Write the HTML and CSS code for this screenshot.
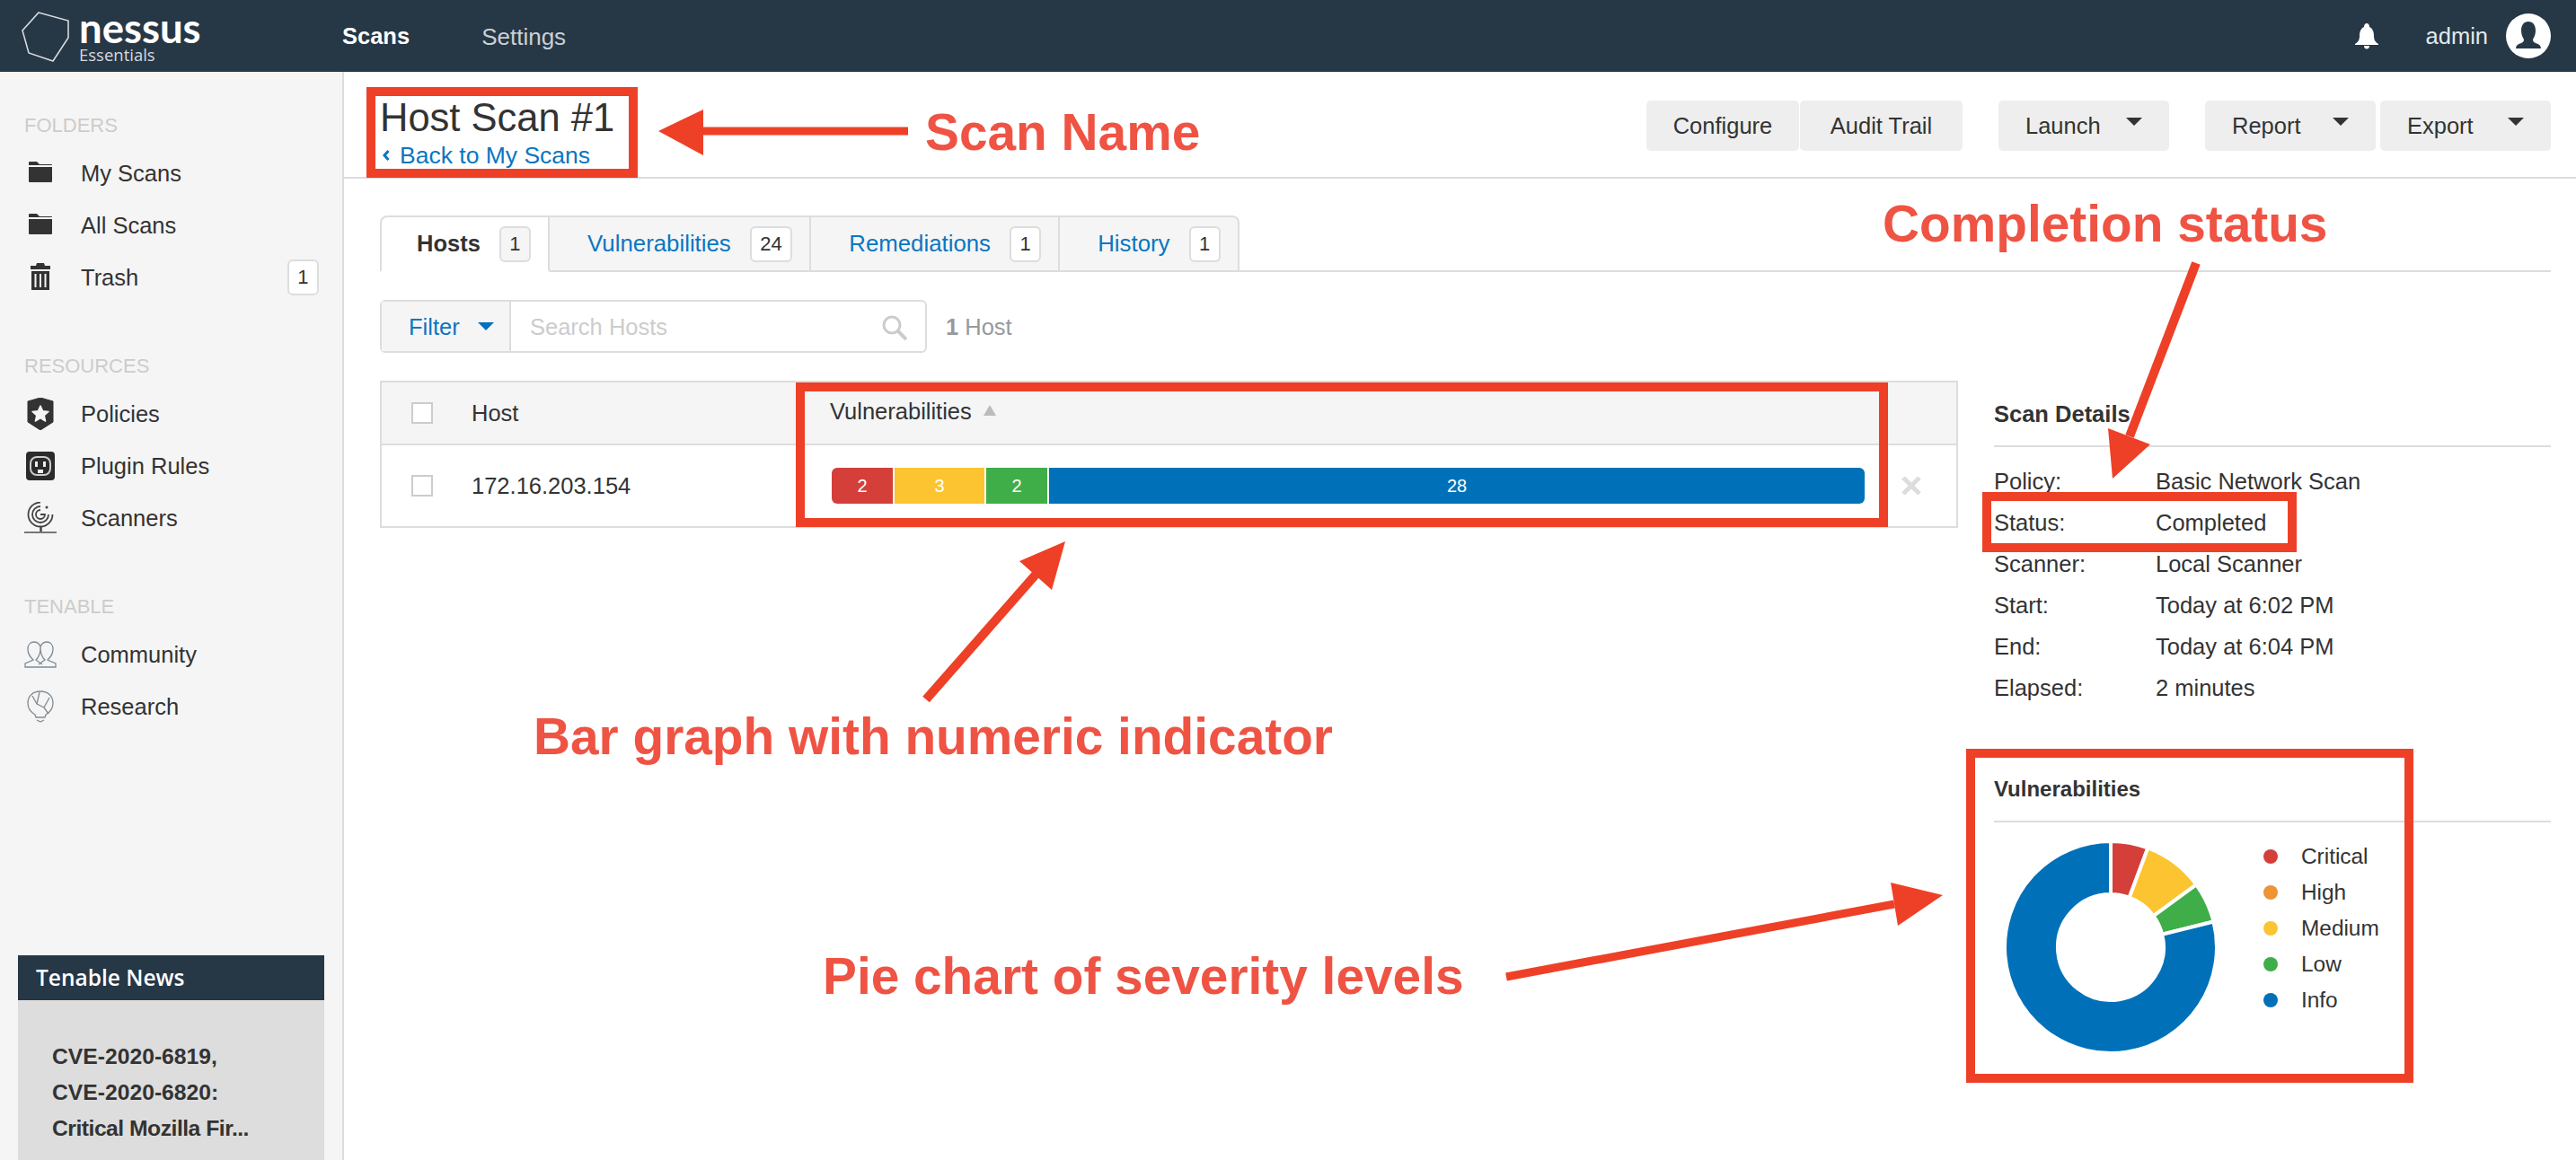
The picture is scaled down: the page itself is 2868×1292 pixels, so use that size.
FILE: index.html
```html
<!DOCTYPE html>
<html lang="en">
<head>
    <meta charset="UTF-8">
    <title>Nessus Essentials - Host Scan #1</title>
    <link rel="stylesheet" href="styles.css">
</head>
<body>

<header class="topbar">
    <div class="logo">
        <svg class="logo-mark" viewBox="0 0 56 58" width="56" height="58">
            <path d="M20 2 L53 11 L53 30 L36 56 L9 47 L2 22 Z" fill="none" stroke="#d5dade" stroke-width="1.6"/>
        </svg>
        <div class="logo-text">
            <span class="logo-name">nessus</span>
            <span class="logo-sub">Essentials</span>
        </div>
    </div>
    <nav class="topnav">
        <a class="active">Scans</a>
        <a>Settings</a>
    </nav>
    <div class="topbar-right">
        <svg class="bell" viewBox="0 0 28 30" width="28" height="30">
            <path d="M14 1 C16 1 17 3 17 5 C21 7 22 11 22 15 C22 20 24 22 27 24 L27 25 L1 25 L1 24 C4 22 6 20 6 15 C6 11 7 7 11 5 C11 3 12 1 14 1 Z" fill="#fff"/>
            <path d="M11 26 L17 26 C17 28 16 29.500 14 29.500 C12 29.500 11 28 11 26 Z" fill="#fff"/>
        </svg>
        <span class="username">admin</span>
        <span class="avatar">
            <svg viewBox="0 0 50 50" width="50" height="50">
                <path d="M25 9 C30 9 33 13 33 19 C33 24 31 27 30 29 C30 31 31 32 33 33 C37 34 39 36 39 39 L11 39 C11 36 13 34 17 33 C19 32 20 31 20 29 C19 27 17 24 17 19 C17 13 20 9 25 9 Z" fill="#263746"/>
            </svg>
        </span>
    </div>
</header>

<div class="layout">
    <aside class="sidebar">
        <div class="side-label">FOLDERS</div>
        <a class="side-item">
            <svg class="side-icon" viewBox="0 0 36 36"><path d="M5 9 L5 6 Q5 5 6 5 L14 5 L17 8 L30 8 Q31 8 31 9 Z M5 11 L31 11 L31 27 Q31 28 30 28 L6 28 Q5 28 5 27 Z" fill="#333"/></svg>
            My Scans
        </a>
        <a class="side-item">
            <svg class="side-icon" viewBox="0 0 36 36"><path d="M5 9 L5 6 Q5 5 6 5 L14 5 L17 8 L30 8 Q31 8 31 9 Z M5 11 L31 11 L31 27 Q31 28 30 28 L6 28 Q5 28 5 27 Z" fill="#333"/></svg>
            All Scans
        </a>
        <a class="side-item">
            <svg class="side-icon" viewBox="0 0 36 36"><path d="M14 2 L22 2 L23 5 L29 5 L29 9 L7 9 L7 5 L13 5 Z M8 11 L28 11 L28 32 L8 32 Z" fill="#333"/><path d="M12.500 14 V29 M18 14 V29 M23.500 14 V29" stroke="#f5f5f5" stroke-width="2"/></svg>
            Trash
            <span class="count side-count">1</span>
        </a>

        <div class="side-label">RESOURCES</div>
        <a class="side-item">
            <svg class="side-icon" viewBox="0 0 36 36"><path d="M18 0 L32 4 L32 27 L18 36 L4 27 L4 4 Z" fill="#333" stroke="#333" stroke-linejoin="round" stroke-width="1"/><path d="M18 9 L20.600 14.800 L27 15.500 L22.200 19.700 L23.600 26 L18 22.700 L12.400 26 L13.800 19.700 L9 15.500 L15.400 14.800 Z" fill="#f5f5f5" stroke="#f5f5f5" stroke-linejoin="round" stroke-width="1.500"/></svg>
            Policies
        </a>
        <a class="side-item">
            <svg class="side-icon" viewBox="0 0 36 36"><rect x="2" y="2" width="32" height="32" rx="4" fill="#2b2b2b"/><rect x="7" y="8" width="22" height="20" rx="7" fill="none" stroke="#ccc" stroke-width="2"/><path d="M12 13 h3 v6 h-3 Z M21 13 h3 v6 h-3 Z M15 22 h6 v4 h-6 Z" fill="#eee"/></svg>
            Plugin Rules
        </a>
        <a class="side-item">
            <svg class="side-icon" viewBox="0 0 36 36" fill="none" stroke="#444" stroke-width="1.800"><path d="M18 .5 A13.500 13.500 0 1 0 31.500 14"/><path d="M18 5 A9 9 0 1 0 27 14"/><path d="M18 9 A5 5 0 1 0 23 14 L18 14"/><circle cx="25" cy="6" r="1.500" fill="#444" stroke="none"/><path d="M18.500 27 V35" stroke-width="2.500"/><path d="M0 34 H36" stroke-width="2" stroke="#777"/></svg>
            Scanners
        </a>

        <div class="side-label">TENABLE</div>
        <a class="side-item">
            <svg class="side-icon" viewBox="0 0 36 36" fill="none" stroke="#7f8b95" stroke-width="1.300"><path d="M1 32 V28 L10 24 C7 21 4 18 4 12 C4 7 7 4 11 4 C15 4 18 7 18 11 C18 7 21 4 25 4 C29 4 32 7 32 12 C32 18 29 21 26 24 L35 28 V32 Z"/><path d="M18 11 C18 17 16 21 13 24 L20 29 M18 11 C18 17 20 21 23 24 L16 29"/></svg>
            Community
        </a>
        <a class="side-item">
            <svg class="side-icon" viewBox="0 0 36 36" fill="none" stroke="#7f8b95" stroke-width="1.300"><path d="M12 27 C7 24 4 19 4 14 C4 6 10 1 18 1 C26 1 32 6 32 14 C32 19 29 24 24 27 L23 30 L13 30 Z"/><path d="M14 33 L18 35 L22 33"/><path d="M9 6 L14 15 L22 19 L27 26"/><path d="M17 2 L14 15 M28 8 L22 19"/></svg>
            Research
        </a>

        <div class="news">
            <div class="news-title">Tenable News</div>
            <div class="news-body">CVE-2020-6819,<br>CVE-2020-6820:<br><span class="news-clip">Critical Mozilla Fir...</span></div>
        </div>
    </aside>

    <main class="main">
        <div class="page-head">
            <div class="page-title">
                <h1>Host Scan #1</h1>
                <a class="back-link">
                    <svg class="back-arrow" viewBox="0 0 8 12" width="8" height="12"><path d="M6.500 1 L2 6 L6.500 11" fill="none" stroke="#0b76c1" stroke-width="3"/></svg>
                    Back to My Scans
                </a>
            </div>
            <div class="actions">
                <div class="btn-group">
                    <button class="btn btn-configure">Configure</button>
                    <button class="btn btn-audit">Audit Trail</button>
                </div>
                <div class="btn-group">
                    <button class="btn dropdown">Launch<i class="caret"></i></button>
                </div>
                <div class="btn-group wide-gap">
                    <button class="btn dropdown">Report<i class="caret"></i></button>
                    <button class="btn dropdown">Export<i class="caret"></i></button>
                </div>
            </div>
        </div>

        <div class="content">
            <div class="tabs">
                <a class="tab active">Hosts <span class="count">1</span></a>
                <a class="tab">Vulnerabilities <span class="count">24</span></a>
                <a class="tab">Remediations <span class="count">1</span></a>
                <a class="tab">History <span class="count">1</span></a>
            </div>

            <div class="filter-row">
                <div class="filter-box">
                    <div class="filter-btn">Filter<i class="caret blue"></i></div>
                    <div class="filter-search">
                        <span>Search Hosts</span>
                        <svg viewBox="0 0 28 28" width="28" height="28" fill="none" stroke="#ccc" stroke-width="3"><circle cx="11" cy="11" r="9"/><path d="M18 18 L27 27" stroke-width="4"/></svg>
                    </div>
                </div>
                <div class="host-count"><b>1</b> Host</div>
            </div>

            <div class="columns">
                <table class="hosts">
                    <colgroup>
                        <col class="col-check">
                        <col class="col-host">
                        <col class="col-vulns">
                        <col>
                    </colgroup>
                    <thead>
                        <tr>
                            <th><span class="checkbox"></span></th>
                            <th>Host</th>
                            <th class="sorted">Vulnerabilities <i class="sort"></i></th>
                            <th></th>
                        </tr>
                    </thead>
                    <tbody>
                        <tr>
                            <td><span class="checkbox"></span></td>
                            <td>172.16.203.154</td>
                            <td>
                                <div class="bar">
                                    <span class="seg critical">2</span>
                                    <span class="seg medium">3</span>
                                    <span class="seg low">2</span>
                                    <span class="seg info">28</span>
                                </div>
                            </td>
                            <td class="remove">
                                <svg viewBox="0 0 22 20" width="22" height="20"><path d="M2 1 L20 19 M20 1 L2 19" stroke="#ddd" stroke-width="5"/></svg>
                            </td>
                        </tr>
                    </tbody>
                </table>

                <div class="details">
                    <h4>Scan Details</h4>
                    <dl class="detail-list">
                        <dt>Policy:</dt><dd>Basic Network Scan</dd>
                        <dt>Status:</dt><dd>Completed</dd>
                        <dt>Scanner:</dt><dd>Local Scanner</dd>
                        <dt>Start:</dt><dd>Today at 6:02 PM</dd>
                        <dt>End:</dt><dd>Today at 6:04 PM</dd>
                        <dt>Elapsed:</dt><dd>2 minutes</dd>
                    </dl>

                    <h4 class="chart-head">Vulnerabilities</h4>
                    <div class="chart">
                        <svg class="donut" viewBox="0 0 232 232" width="232" height="232" stroke="#fff" stroke-width="4">
                            <path fill="#d43f3a" d="M116 -2 A118 118 0 0 1 157.300 5.500 L136.700 60.700 A59 59 0 0 0 116 57 Z"/>
                            <path fill="#fdc431" d="M157.300 5.500 A118 118 0 0 1 211.200 46.300 L163.600 81.200 A59 59 0 0 0 136.700 60.700 Z"/>
                            <path fill="#3fae49" d="M211.200 46.300 A118 118 0 0 1 230.500 87.500 L173.200 101.700 A59 59 0 0 0 163.600 81.200 Z"/>
                            <path fill="#0071b9" d="M230.500 87.500 A118 118 0 1 1 116 -2 L116 57 A59 59 0 1 0 173.200 101.700 Z"/>
                        </svg>
                        <ul class="legend">
                            <li><i class="dot critical"></i>Critical</li>
                            <li><i class="dot high"></i>High</li>
                            <li><i class="dot medium"></i>Medium</li>
                            <li><i class="dot low"></i>Low</li>
                            <li><i class="dot info"></i>Info</li>
                        </ul>
                    </div>
                </div>
            </div>
        </div>
    </main>
</div>

<!-- annotations drawn on top of the screenshot -->
<div class="note-box box-name"></div>
<div class="note-box box-bar"></div>
<div class="note-box box-status"></div>
<div class="note-box box-pie"></div>

<svg class="note-arrows" viewBox="0 0 2868 1292" width="2868" height="1292" fill="#ee4027" stroke="#ee4027">
    <path d="M775 146 H1011" stroke-width="9"/>
    <polygon points="733,146 783,122 783,173" stroke="none"/>
    <path d="M2445 293 L2371 486" stroke-width="10"/>
    <polygon points="2352,533 2347,477 2394,495" stroke="none"/>
    <path d="M1031 779 L1153 640" stroke-width="10"/>
    <polygon points="1186,603 1171,657 1135,625" stroke="none"/>
    <path d="M1677 1088 L2109 1007" stroke-width="9"/>
    <polygon points="2163,997 2113,1031 2105,983" stroke="none"/>
</svg>

<div class="note-text text-name">Scan Name</div>
<div class="note-text text-status">Completion status</div>
<div class="note-text text-bar">Bar graph with numeric indicator</div>
<div class="note-text text-pie">Pie chart of severity levels</div>

</body>
</html>
```

FILE: styles.css
```css
/* General Styles */
* {
    box-sizing: border-box;
}

html, body {
    margin: 0;
    height: 1292px;
    overflow: hidden;
}

body {
    position: relative;
    font-family: "Liberation Sans", Arial, sans-serif;
    font-size: 25.5px;
    color: #333;
    background: #fff;
}

a {
    color: inherit;
    text-decoration: none;
}

i {
    display: inline-block;
}

/* Top bar */
.topbar {
    display: flex;
    align-items: center;
    height: 80px;
    background-color: #263746;
    color: #fff;
}

.logo {
    display: flex;
    align-items: flex-start;
    width: 381px;
    height: 80px;
    padding: 12px 0 0 23px;
}

.logo-text {
    display: flex;
    flex-direction: column;
    margin-left: 9px;
}

.logo-name {
    font-family: Lato, sans-serif;
    font-weight: 700;
    font-size: 45.500px;
    line-height: 38px;
}

.logo-sub {
    font-family: "Open Sans", sans-serif;
    font-size: 18.500px;
    line-height: 21px;
    color: #d5dade;
}

.topnav {
    display: flex;
    gap: 80px;
    padding-top: 3px;
    color: #c9d0d6;
}

.topnav a {
    font-size: 26px;
}

.topnav .active {
    font-size: 25.500px;
    font-weight: bold;
    color: #fff;
}

.topbar-right {
    display: flex;
    align-items: center;
    margin-left: auto;
    padding-right: 28px;
}

.username {
    margin: 0 20px 0 52px;
    color: #e4e8eb;
}

.avatar {
    width: 50px;
    height: 50px;
    border-radius: 50%;
    background: #fff;
    overflow: hidden;
}

.avatar svg {
    display: block;
}

/* Sidebar */
.layout {
    display: flex;
    height: 1212px;
}

.sidebar {
    display: flex;
    flex-direction: column;
    flex: none;
    width: 383px;
    padding-top: 45px;
    background-color: #f5f5f5;
    border-right: 2px solid #ddd;
}

.side-label {
    height: 30px;
    line-height: 30px;
    margin: 0 0 9px 27px;
    font-size: 22px;
    color: #ccc;
}

.side-item {
    display: flex;
    align-items: center;
    height: 58px;
    padding: 0 26px 0 27px;
}

.side-item + .side-label {
    margin-top: 55px;
}

.side-icon {
    width: 36px;
    height: 36px;
    margin-right: 27px;
    flex: none;
}

.count {
    display: inline-block;
    min-width: 35px;
    height: 40px;
    line-height: 36px;
    padding: 0 9.500px;
    margin-left: 21px;
    text-align: center;
    font-size: 22px;
    font-weight: normal;
    color: #333;
    background: #fff;
    border: 2px solid #ddd;
    border-radius: 6px;
}

.side-count {
    margin-left: auto;
}

.news {
    margin: auto 20px 0;
    height: 228px;
    overflow: hidden;
}

.news-title {
    height: 50px;
    line-height: 50px;
    padding-left: 20px;
    font-family: "Open Sans", sans-serif;
    font-weight: 600;
    font-size: 24.500px;
    color: #fff;
    background-color: #263746;
}

.news-body {
    height: 178px;
    padding: 43px 0 0 38px;
    line-height: 40px;
    font-weight: bold;
    font-size: 24.700px;
    background-color: #ddd;
}

.news-clip {
    letter-spacing: -0.5px;
}

/* Main area */
.main {
    flex: 1;
    min-width: 0;
}

.page-head {
    display: flex;
    height: 119px;
    padding: 26px 28px 0 40px;
    border-bottom: 2px solid #ddd;
}

.page-title h1 {
    margin: 0;
    font-size: 43.500px;
    font-weight: normal;
    line-height: 50px;
}

.back-link {
    display: flex;
    align-items: center;
    line-height: 34px;
    font-size: 26.500px;
    color: #0b76c1;
}

.back-arrow {
    margin: 0 11px 0 3px;
}

.actions {
    display: flex;
    gap: 40px;
    margin-left: auto;
    margin-top: 6px;
}

.btn-group {
    display: flex;
    gap: 1px;
}

.btn-group.wide-gap {
    gap: 5px;
}

.btn {
    display: flex;
    align-items: center;
    justify-content: center;
    height: 56px;
    padding: 0;
    font-family: inherit;
    font-size: 25.500px;
    color: #333;
    background-color: #eee;
    border: none;
    border-radius: 5px;
}

.btn-configure {
    width: 170px;
}

.btn-audit {
    width: 181px;
}

.btn.dropdown {
    justify-content: space-between;
    width: 190px;
    padding: 0 30px;
}

.caret {
    width: 0;
    height: 0;
    margin-bottom: 10px;
    border-left: 9px solid transparent;
    border-right: 9px solid transparent;
    border-top: 9px solid #333;
}

.caret.blue {
    margin-left: 20px;
    margin-bottom: 2px;
    border-top-color: #0071b9;
}

.content {
    padding: 41px 28px 0 40px;
}

/* Tabs */
.tabs {
    display: flex;
    height: 63px;
    border-bottom: 2px solid #ddd;
}

.tab {
    display: flex;
    align-items: center;
    height: 63px;
    padding: 0 19px 0 42px;
    font-size: 25.800px;
    color: #0b76c1;
    background-color: #f5f5f5;
    border: 2px solid #ddd;
    border-left: none;
}

.tab:first-child {
    padding-left: 39px;
    border-left: 2px solid #ddd;
    border-top-left-radius: 8px;
}

.tab:last-child {
    border-top-right-radius: 8px;
}

.tab.active {
    font-size: 25.500px;
    font-weight: bold;
    color: #333;
    background: #fff;
    border-bottom-color: #fff;
}

.tab.active .count {
    background-color: #f5f5f5;
}

/* Filter */
.filter-row {
    display: flex;
    align-items: center;
    margin-top: 31px;
}

.filter-box {
    display: flex;
    width: 609px;
    height: 59px;
    border: 2px solid #ddd;
    border-radius: 6px;
}

.filter-btn {
    display: flex;
    align-items: center;
    width: 144px;
    padding: 2px 0 0 30px;
    color: #0b76c1;
    background-color: #f5f5f5;
    border-right: 2px solid #ddd;
}

.filter-search {
    display: flex;
    flex: 1;
    align-items: center;
    justify-content: space-between;
    padding: 2px 20px 0 21px;
    color: #ccc;
}

.host-count {
    margin-left: 21px;
    padding-top: 2px;
    color: #999;
}

/* Hosts table */
.columns {
    display: flex;
    gap: 40px;
    margin-top: 31px;
}

.hosts {
    flex: none;
    width: 1757px;
    height: 164px;
    table-layout: fixed;
    border-collapse: separate;
    border-spacing: 0;
    border: 2px solid #ddd;
    align-self: flex-start;
}

.col-check {
    width: 100px;
}

.col-host {
    width: 399px;
}

.col-vulns {
    width: 1152px;
}

.hosts th {
    height: 70px;
    padding: 0;
    text-align: left;
    font-weight: normal;
    background-color: #f5f5f5;
    border-bottom: 2px solid #ddd;
}

.hosts th.sorted {
    padding-bottom: 3px;
}

.hosts td {
    height: 90px;
    padding: 0;
}

.checkbox {
    display: block;
    width: 24px;
    height: 24px;
    margin-left: 33px;
    background: #fff;
    border: 2px solid #ccc;
}

.sort {
    width: 0;
    height: 0;
    margin: 0 0 4px 6px;
    border-left: 7px solid transparent;
    border-right: 7px solid transparent;
    border-bottom: 12px solid #bbb;
}

.bar {
    display: flex;
    gap: 2px;
    height: 40px;
    margin-left: 2px;
    font-size: 20px;
    color: #fff;
}

.seg {
    display: flex;
    align-items: center;
    justify-content: center;
}

.seg.critical {
    width: 68px;
    background-color: #d43f3a;
    border-radius: 6px 0 0 6px;
}

.seg.medium {
    width: 100px;
    background-color: #fdc431;
}

.seg.low {
    width: 68px;
    background-color: #3fae49;
}

.seg.info {
    flex: 1;
    background-color: #0071b9;
    border-radius: 0 6px 6px 0;
}

.remove svg {
    display: block;
    margin: 0 0 0 41px;
}

/* Right column */
.details {
    flex: 1;
    min-width: 0;
}

.details h4 {
    margin: 18px 0 0;
    height: 56px;
    line-height: 38px;
    font-size: 25.500px;
    font-weight: bold;
    border-bottom: 2px solid #ddd;
}

.detail-list {
    display: grid;
    grid-template-columns: 180px 1fr;
    grid-auto-rows: 46px;
    align-items: center;
    margin: 15px 0 0;
}

.detail-list dd {
    margin: 0;
}

.details h4.chart-head {
    margin-top: 71px;
    font-size: 24px;
}

.chart {
    display: flex;
    align-items: flex-start;
    margin-top: 23px;
    padding-left: 14px;
}

.donut {
    flex: none;
    overflow: visible;
}

.legend {
    list-style: none;
    margin: -5px 0 0 54px;
    padding: 0;
    font-size: 24.400px;
}

.legend li {
    display: flex;
    align-items: center;
    height: 40px;
}

.dot {
    width: 16px;
    height: 16px;
    margin-right: 26px;
    border-radius: 50%;
}

.dot.critical { background-color: #d43f3a; }
.dot.high { background-color: #ee9336; }
.dot.medium { background-color: #fdc431; }
.dot.low { background-color: #3fae49; }
.dot.info { background-color: #0071b9; }

/* Annotations */
.note-box {
    position: absolute;
    border: 10px solid #ee4027;
}

.box-name { left: 408px; top: 97px; width: 302px; height: 101px; }
.box-bar { left: 886px; top: 426px; width: 1216px; height: 161px; }
.box-status { left: 2207px; top: 548px; width: 350px; height: 67px; }
.box-pie { left: 2189px; top: 834px; width: 498px; height: 372px; }

.note-arrows {
    position: absolute;
    left: 0;
    top: 0;
}

.note-text {
    position: absolute;
    font-size: 56.800px;
    font-weight: bold;
    line-height: 66px;
    white-space: nowrap;
    color: #ef5343;
}

.text-name { left: 1030px; top: 115px; }
.text-status { left: 2096px; top: 217px; }
.text-bar { left: 594px; top: 788px; }
.text-pie { left: 916px; top: 1055px; }
```
